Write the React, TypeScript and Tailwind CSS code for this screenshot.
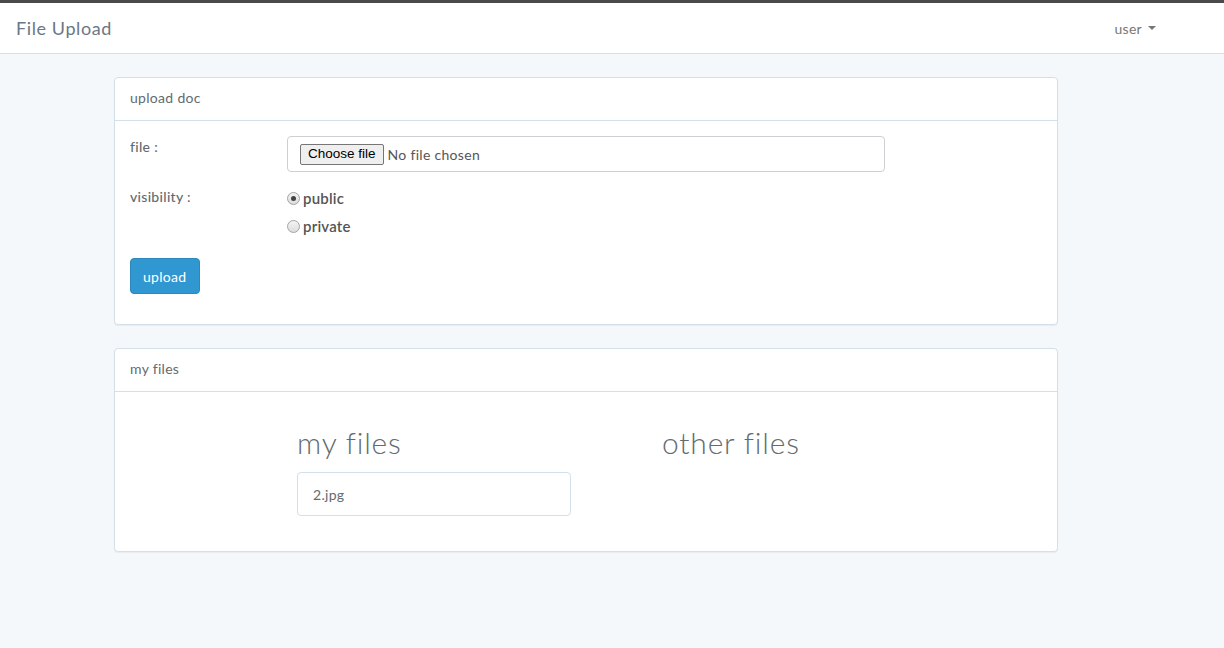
import React from 'react';

const font = { fontFamily: 'Lato, "Open Sans", sans-serif' };

const Radio: React.FC<{ checked?: boolean; label: string }> = ({ checked, label }) => (
  <label className="flex items-center h-7 gap-[3px]">
    <span className="w-[13px] h-[13px] rounded-full border border-[#a3a3a3] bg-gradient-to-b from-[#f4f4f4] to-[#dcdcdc] flex items-center justify-center">
      {checked && <span className="w-[5px] h-[5px] rounded-full bg-[#444]" />}
    </span>
    <span className="font-semibold text-[15px] text-[#555] tracking-[0.2px]">{label}</span>
  </label>
);

export default function App() {
  return (
    <div className="min-h-[648px] bg-[#f5f8fa] text-[14px] text-[#636b6f] tracking-[0.3px]" style={font}>
      <div className="h-[3px] bg-[#4a4a4a]" />
      <nav className="h-[51px] bg-white border-b border-[#d3e0e9] flex items-center justify-between pl-4 pr-[68px]">
        <span className="text-[18px] text-[#6b7785] tracking-[0.6px]">File Upload</span>
        <span className="flex items-center gap-[6px] text-[#777]">
          user
          <span className="w-0 h-0 border-l-4 border-r-4 border-t-4 border-l-transparent border-r-transparent border-t-[#777]" />
        </span>
      </nav>

      <div className="w-[944px] ml-[114px] pt-[23px] flex flex-col gap-[23px]">
        <div className="bg-white border border-[#d3e0e9] rounded shadow-[0_1px_1px_rgba(0,0,0,0.05)]">
          <div className="h-[43px] border-b border-[#d3e0e9] px-[15px] pb-[3px] flex items-center">upload doc</div>
          <div className="p-[15px]">
            <div className="flex mb-[15px]">
              <div className="w-[157px] font-medium">file :</div>
              <div className="w-[598px] h-[36px] border border-[#ccd0d2] rounded flex items-center px-3 gap-[4px]">
                <span className="h-[21px] px-[7px] border border-[#767676] rounded-[2px] bg-[#efefef] text-[13.5px] text-black flex items-center tracking-normal" style={{ fontFamily: '"Liberation Sans", Arial, sans-serif' }}>
                  Choose file
                </span>
                <span className="text-[#555]">No file chosen</span>
              </div>
            </div>
            <div className="flex mb-[18px]">
              <div className="w-[157px] -mt-[1px] font-medium">visibility :</div>
              <div className="flex flex-col -mt-[3px]">
                <Radio checked label="public" />
                <Radio label="private" />
              </div>
            </div>
            <button className="h-[36px] px-3 rounded bg-[#3097d1] border border-[#2a88bd] text-white box-border">upload</button>
            <div className="h-[15px]" />
          </div>
        </div>

        <div className="bg-white border border-[#d3e0e9] rounded shadow-[0_1px_1px_rgba(0,0,0,0.05)]">
          <div className="h-[43px] border-b border-[#d3e0e9] px-[15px] pb-[3px] flex items-center">my files</div>
          <div className="pt-[32px] pb-[35px] pl-[182px] flex">
            <div className="w-[365px]">
              <h2 className="text-[30px] leading-[36px] font-light tracking-[0.8px] mb-[12px]">my files</h2>
              <div className="w-[274px] h-[44px] border border-[#d3e0e9] rounded flex items-center px-[15px]">2.jpg</div>
            </div>
            <div>
              <h2 className="text-[30px] leading-[36px] font-light tracking-[0.8px]">other files</h2>
            </div>
          </div>
        </div>
      </div>
    </div>
  );
}
